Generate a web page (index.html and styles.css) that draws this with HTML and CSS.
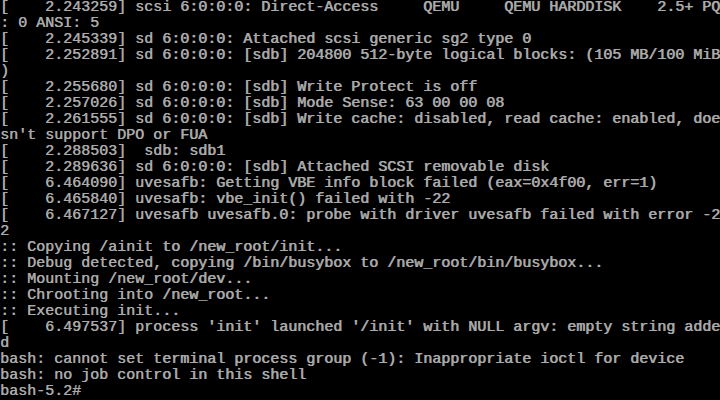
FILE: index.html
```html
<!DOCTYPE html>
<html>
<head>
<meta charset="utf-8">
<link rel="stylesheet" href="styles.css">
</head>
<body>
<pre class="console">[    2.243259] scsi 6:0:0:0: Direct-Access     QEMU     QEMU HARDDISK    2.5+ PQ
: 0 ANSI: 5
[    2.245339] sd 6:0:0:0: Attached scsi generic sg2 type 0
[    2.252891] sd 6:0:0:0: [sdb] 204800 512-byte logical blocks: (105 MB/100 MiB
)
[    2.255680] sd 6:0:0:0: [sdb] Write Protect is off
[    2.257026] sd 6:0:0:0: [sdb] Mode Sense: 63 00 00 08
[    2.261555] sd 6:0:0:0: [sdb] Write cache: disabled, read cache: enabled, doe
sn't support DPO or FUA
[    2.288503]  sdb: sdb1
[    2.289636] sd 6:0:0:0: [sdb] Attached SCSI removable disk
[    6.464090] uvesafb: Getting VBE info block failed (eax=0x4f00, err=1)
[    6.465840] uvesafb: vbe_init() failed with -22
[    6.467127] uvesafb uvesafb.0: probe with driver uvesafb failed with error -2
2
:: Copying /ainit to /new_root/init...
:: Debug detected, copying /bin/busybox to /new_root/bin/busybox...
:: Mounting /new_root/dev...
:: Chrooting into /new_root...
:: Executing init...
[    6.497537] process 'init' launched '/init' with NULL argv: empty string adde
d
bash: cannot set terminal process group (-1): Inappropriate ioctl for device
bash: no job control in this shell
bash-5.2#</pre>
</body>
</html>
```
FILE: styles.css
```css
html, body {
  margin: 0;
  padding: 0;
  background: #000;
  width: 720px;
  height: 400px;
  overflow: hidden;
}
.console {
  margin: 0;
  padding: 0;
  font-family: "Liberation Mono", monospace;
  font-size: 15px;
  line-height: 16px;
  color: #aaaaaa;
  white-space: pre;
  text-shadow: 0.6px 0 0 #aaaaaa;
}
```
